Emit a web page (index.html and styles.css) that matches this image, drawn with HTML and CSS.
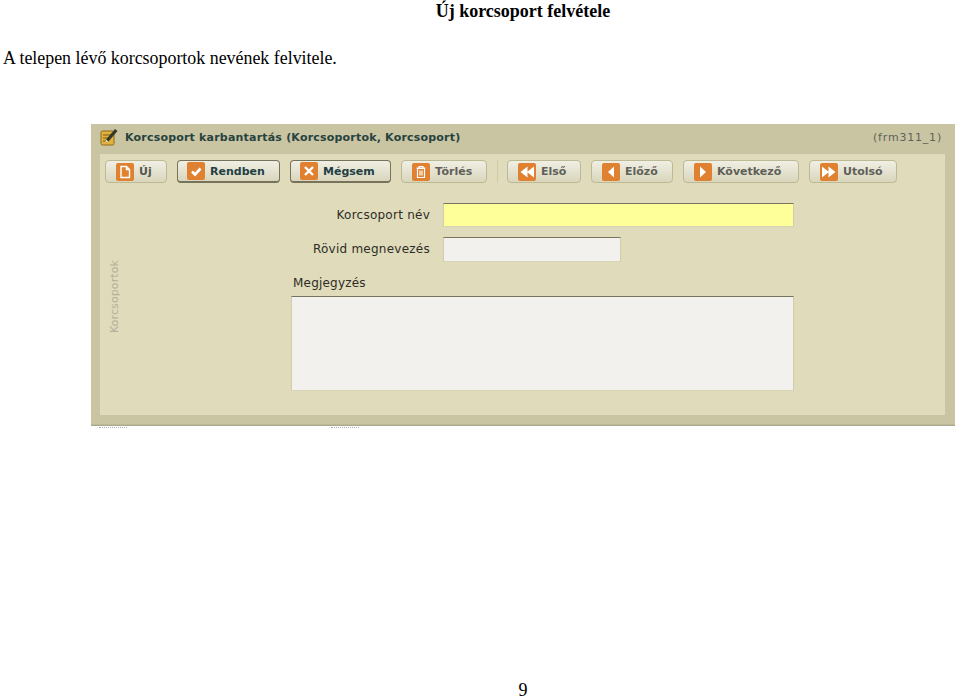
FILE: index.html
```html
<!DOCTYPE html>
<html lang="hu">
<head>
<meta charset="utf-8">
<title>Új korcsoport felvétele</title>
<link rel="stylesheet" href="styles.css">
</head>
<body>
<div class="page">
  <h1 class="doc-title">Új korcsoport felvétele</h1>
  <p class="doc-text">A telepen lévő korcsoportok nevének felvitele.</p>
  <section class="window">
    <header class="titlebar">
      <svg class="title-icon" viewBox="0 0 18 18" width="18" height="18">
        <rect x="1" y="3" width="13" height="14" rx="1.500" fill="#e3b23c" stroke="#8a6a1c"/>
        <path d="M3 7h8M3 10h6M3 13h5" stroke="#7a5a18" stroke-width="1"/>
        <path d="M6 11.500 15 1l2.500 2-9 10.500-3.500 1.500z" fill="#33392a"/>
        <path d="M6 11.500l2.500 2-3.500 1.500z" fill="#f0e2b0"/>
      </svg>
      <span class="title-text">Korcsoport karbantartás (Korcsoportok, Korcsoport)</span>
      <span class="form-id">(frm311_1)</span>
    </header>
    <div class="body">
      <nav class="toolbar">
        <button class="btn w-uj" type="button">
          <svg class="ico" viewBox="0 0 18 18"><rect width="18" height="18" rx="2" fill="#df8130"/><path d="M5 3.500h5.500L13.500 6.500V14.500H5zM10.500 3.500V6.500H13.500" fill="none" stroke="#fff" stroke-width="1.400"/></svg>
          <span>Új</span>
        </button>
        <button class="btn btn-active w-rendben" type="button">
          <svg class="ico" viewBox="0 0 18 18"><rect width="18" height="18" rx="2" fill="#df8130"/><path d="M5 9.500l3 3 5.500-6" fill="none" stroke="#fff" stroke-width="2.600"/></svg>
          <span>Rendben</span>
        </button>
        <button class="btn btn-active w-megsem" type="button">
          <svg class="ico" viewBox="0 0 18 18"><rect width="18" height="18" rx="2" fill="#df8130"/><path d="M5 5l8 8M13 5l-8 8" stroke="#fff" stroke-width="2.400"/></svg>
          <span>Mégsem</span>
        </button>
        <button class="btn btn-muted w-torles" type="button">
          <svg class="ico" viewBox="0 0 18 18"><rect width="18" height="18" rx="2" fill="#df8130"/><path d="M4.500 5h9M7 5V3.500h4V5M5.500 5.500h7V14.500h-7zM8 7.500v5M10 7.500v5" fill="none" stroke="#fff" stroke-width="1.200"/></svg>
          <span>Törlés</span>
        </button>
        <span class="sep"></span>
        <button class="btn btn-muted w-elso" type="button">
          <svg class="ico" viewBox="0 0 18 18"><rect width="18" height="18" rx="2" fill="#df8130"/><path d="M9.500 3.500v11L2.500 9zM16 3.500v11L9 9z" fill="#fff"/></svg>
          <span>Első</span>
        </button>
        <button class="btn btn-muted w-elozo" type="button">
          <svg class="ico" viewBox="0 0 18 18"><rect width="18" height="18" rx="2" fill="#df8130"/><path d="M12 3.500v11L6 9z" fill="#fff"/></svg>
          <span>Előző</span>
        </button>
        <button class="btn btn-muted w-kov" type="button">
          <svg class="ico" viewBox="0 0 18 18"><rect width="18" height="18" rx="2" fill="#df8130"/><path d="M6 3.500v11L12 9z" fill="#fff"/></svg>
          <span>Következő</span>
        </button>
        <button class="btn btn-muted w-utolso" type="button">
          <svg class="ico" viewBox="0 0 18 18"><rect width="18" height="18" rx="2" fill="#df8130"/><path d="M2 3.500v11L9 9zM8.500 3.500v11L15.500 9z" fill="#fff"/></svg>
          <span>Utolsó</span>
        </button>
      </nav>
      <div class="content">
        <div class="side-tab"><span class="side-label">Korcsoportok</span></div>
        <form class="form">
          <div class="row">
            <label class="label">Korcsoport név</label>
            <div class="input input-required"></div>
          </div>
          <div class="row row-second">
            <label class="label">Rövid megnevezés</label>
            <div class="input input-short"></div>
          </div>
          <label class="label-top">Megjegyzés</label>
          <div class="input textarea"></div>
        </form>
      </div>
    </div>
    <div class="clipped-row"><span class="stub stub-a"></span><span class="stub stub-b"></span></div>
  </section>
  <footer class="page-number">9</footer>
</div>
</body>
</html>
```
FILE: styles.css
```css
* { box-sizing: border-box; }
html, body { margin: 0; padding: 0; background: #fff; }
.page {
  height: 697px;
  overflow: hidden;
  display: flex;
  flex-direction: column;
  font-family: "Liberation Serif", "Times New Roman", serif;
  color: #000;
}
.doc-title {
  flex: none;
  margin: 1px 0 0 86px;
  text-align: center;
  font-size: 18px;
  line-height: 21px;
  font-weight: bold;
}
.doc-text {
  flex: none;
  margin: 26px 0 0 3px;
  font-size: 17.900px;
  line-height: 21px;
}
.window {
  flex: none;
  margin: 55px 5px 0 91px;
  height: 302px;
  background: #c9c4a2;
  font-family: "DejaVu Sans", Verdana, sans-serif;
  display: flex;
  flex-direction: column;
  position: relative;
}
.titlebar {
  height: 30px;
  flex: none;
  display: flex;
  align-items: center;
  padding: 0 13px 4px 9px;
}
.title-icon { flex: none; margin-right: 7px; }
.title-text { font-size: 11px; font-weight: bold; color: #27423f; letter-spacing: .2px; }
.form-id { margin-left: auto; font-size: 11px; color: #5f6358; letter-spacing: .8px; }
.body {
  margin: 0 10px 0 9px;
  height: 261px;
  background: #e0dbba;
  flex: none;
  padding: 6px 0 0 5px;
  display: flex;
  flex-direction: column;
}
.toolbar { display: flex; gap: 10px; height: 23px; flex: none; align-items: stretch; }
.btn {
  height: 23px;
  padding: 0 0 0 10px;
  display: flex;
  align-items: center;
  gap: 5px;
  border: 1px solid #bdb995;
  border-radius: 4px;
  background: linear-gradient(#f0efe4, #d9d6bc);
  font-family: inherit;
  font-size: 11px;
  font-weight: bold;
  color: #555850;
  flex: none;
}
.btn-active {
  border-color: #77735a;
  border-width: 1px 1px 2px 1px;
  color: #1f3f44;
  padding-left: 9px;
}
.btn-muted { color: #605f58; }
.ico { width: 18px; height: 18px; flex: none; }
.w-uj { width: 62px; }
.w-rendben { width: 103px; }
.w-megsem { width: 101px; }
.w-torles { width: 86px; }
.w-elso { width: 74px; }
.w-elozo { width: 82px; }
.w-kov { width: 116px; }
.w-utolso { width: 88px; }
.sep { width: 1px; height: 23px; margin-right: -1px; background: #cfcaa8; }
.content { display: flex; flex: 1; }
.side-tab { width: 20px; margin-left: 3px; display: flex; align-items: flex-end; padding-bottom: 82px; }
.side-label {
  writing-mode: vertical-rl;
  transform: rotate(180deg);
  font-size: 11px;
  color: #b3b09a;
  font-family: "DejaVu Sans", Verdana, sans-serif;
  letter-spacing: .1px;
}
.form { margin-left: 163px; width: 503px; padding-top: 20px; }
.row { display: flex; align-items: center; justify-content: flex-end; height: 24px; }
.row-second { margin-top: 10px; justify-content: flex-start; }
.row .label { margin-right: 13px; font-size: 12px; letter-spacing: .25px; color: #2d2d28; text-align: right; white-space: nowrap; }
.row-second .label { width: 152px; margin-right: 0; padding-right: 13px; }
.input { background: #f2f1ed; border-top: 1px solid #77735f; border-left: 1px solid #d0ccae; border-right: 1px solid #d0ccae; border-bottom: 1px solid #d8d4b8; }
.input-required { width: 351px; height: 24px; background: #ffff99; }
.input-short { width: 178px; height: 25px; }
.label-top { display: block; margin-top: 16px; margin-left: 2px; font-size: 12px; letter-spacing: .2px; line-height: 13px; color: #2d2d28; }
.textarea { width: 100%; height: 95px; margin-top: 6px; }
.clipped-row {
  position: absolute;
  left: 0;
  right: 0;
  bottom: 0;
  height: 2px;
  background: #bdb999;
  border-bottom: 1px solid #a9a68d;
}
.stub { position: absolute; top: 3px; height: 1px; width: 28px; border-top: 1px dotted #aaa; }
.stub-a { left: 8px; }
.stub-b { left: 240px; }
.page-number {
  flex: none;
  margin: 257px 0 0 86px;
  text-align: center;
  font-size: 18px;
  line-height: 14px;
}
```
